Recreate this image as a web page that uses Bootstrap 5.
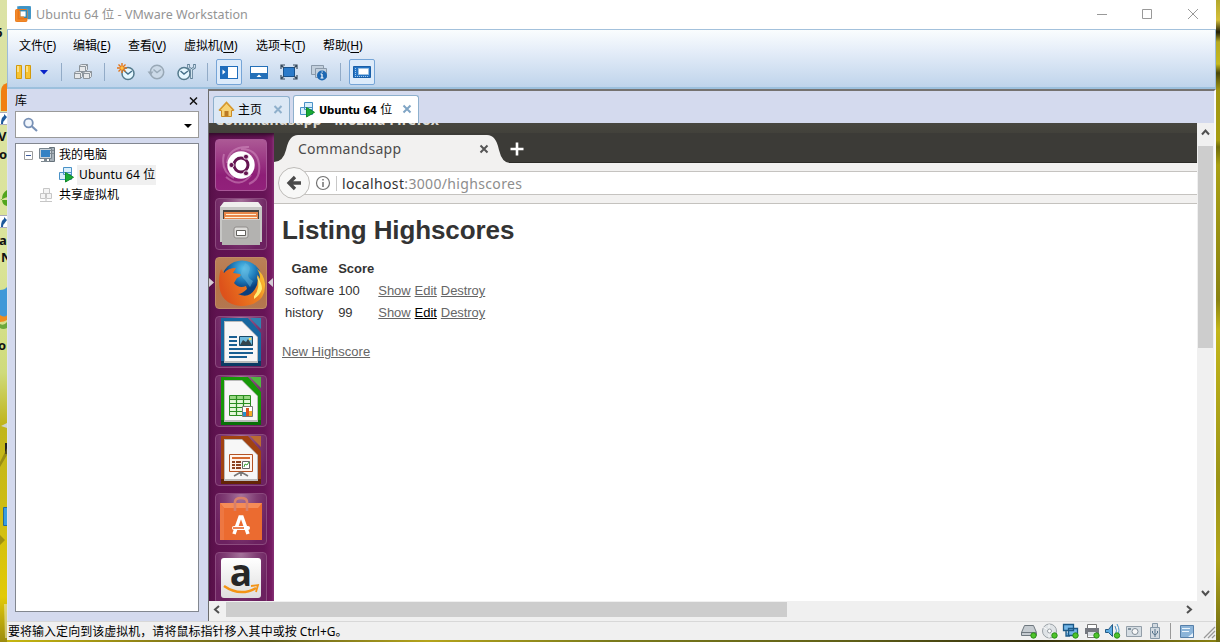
<!DOCTYPE html>
<html lang="zh-CN">
<head>
<meta charset="utf-8">
<title>Ubuntu 64 位 - VMware Workstation</title>
<link href="https://cdn.jsdelivr.net/npm/bootstrap@5.3.0/dist/css/bootstrap.min.css" rel="stylesheet">
<style>
html,body{height:642px;overflow:hidden}
body{font:12px/16px "Noto Sans","Noto Sans CJK SC",sans-serif;color:#000;background:#b5a71a}
svg{display:block;flex:none}
.desk{width:1220px;height:642px;background:linear-gradient(90deg,#c9b90f,#8f8216 12%,#63601c 22%,#b5a41b 35%,#7b7b1b 50%,#5f5f17 70%,#332f0c 85%,#8a8212)}
.edge-l{width:7px}
.edge-r{width:4px;background:linear-gradient(#b3a82c,#d5bf3a 20px,#201d06 32px,#b7aa22 42px,#c5b91f 64px,#4a4708 73px,#a29713 90px,#a79d10 140px,#6f6c0b 147px,#a9a014 165px,#8a8312 300px,#c3b61b 330px,#9b9417 480px,#b3a61c 560px,#6e6b12)}
.win{width:1209px;height:640px;background:#f0f0f0}
.title{height:29px;background:#fff;color:#949494;padding-left:8px}
.title svg:first-child{margin-top:-2px}
.title .cap{font-size:12.5px;letter-spacing:.04px;margin-left:5px}
.bars{height:60px;border:1px solid #9dbcd8;border-top-color:#a3c1dc;border-bottom:2px solid #9cc0dd;background:linear-gradient(#fafdfe,#e6eef9 35%,#bfd4eb)}
.menu{height:27px;padding-left:11px;line-height:32px}
.menu span{white-space:nowrap;letter-spacing:-.1px}
.menu u{text-underline-offset:2px}
.tools{height:30px;padding-left:7px}
.lib{width:201px;background:#d4daee;border-left:1px solid #dfe3f0}
.lib-h{height:22px;padding:1px 6px 0 7px}
.find{margin-left:7px;width:184px;height:27px;background:#fff;border:1px solid #9a9a9a}
.tree{margin:5px 0 0 7px;width:184px;height:469px;background:#fff;border:1px solid #828790;padding-top:1px}
.tree>div{height:20px}
.vm{width:1008px;border-left:1px solid #6d6d6d;border-top:2px solid #757270;border-right:2px solid #fafafa}
.tabs{height:32px;background:#d4daee;padding-left:4px}
.vtab{border:1px solid #8eb0cd;border-bottom:0;border-radius:3px 3px 0 0}
.vtab.home{width:77px;height:27px;background:#dce8f5}
.vtab.cur{width:126px;height:28px;background:#fff;margin-left:3px}
.vtab b{font:bold 11.3px/16px "DejaVu Sans Condensed","DejaVu Sans","Noto Sans CJK SC",sans-serif;font-stretch:condensed;white-space:nowrap;letter-spacing:-.2px}
.vtab b span{font:12px/16px "Noto Sans CJK SC",sans-serif}
.guest{width:988px;height:478px;background:#fff;overflow:hidden}
.gtitle{height:10px;overflow:hidden;background:linear-gradient(#47463f,#42413b);color:#dfdbd2;font:bold 14px/20px "Noto Sans",sans-serif;padding-left:6px}
.gtitle span{display:block;margin-top:-13px;letter-spacing:.22px;white-space:nowrap}
.launch{width:65px;background:linear-gradient(90deg,#560f47,#5f1350 12%,#661456 85%,#751b62 96%,#8b367b);box-shadow:inset 0 5px 4px -3px #2d0a26;padding:6px 7px 0 6px;gap:7px;height:468px}
.tile{width:52px;height:52px;border-radius:4px;border:1px solid #8b4a7e;background:radial-gradient(ellipse at 50% 0,#a5729b,#7f3c73 45%,#6c2160 80%);flex:none}
.tile svg{margin:-1px}
.tile.dash{background:linear-gradient(#ac5995,#8e1e77 70%,#92217b);border-color:#a95798}
.tile.fox{background:linear-gradient(#ba8158,#b77346 60%,#b37750);border-color:#c08a66}
.strip{height:30px;background:#3c3b37;border-bottom:1px solid #2c2b28}
.strip svg{height:30px}
.nav-row{height:41px;background:#f2f1f0;border-bottom:1px solid #c4c2be;padding-top:8px}
.addr{height:24px;background:#fff;border:solid #c5c3c0;border-width:1px 0;margin-left:18px}
.page{padding:8px;font:13px/18px "Liberation Sans",Arial,sans-serif;color:#333}
.page h1{font:bold 26px/36px "Liberation Sans",Arial,sans-serif;margin:0 0 9px;letter-spacing:-.1px}
.page a,.page a:hover{color:#666;text-decoration:underline}
.page a.hot{color:#000}
.page table{border-collapse:separate;border-spacing:2px}
.page td,.page th{padding:1px}
.page th{text-align:center}
.page td a{letter-spacing:-.05px}
.vsb{width:17px;height:495px;background:#f0f0f0;padding-left:1px}
.vsb i{display:block;width:15px;height:202px;background:#cdcdcd}
.hsb{height:17px;background:#f0f0f0}
.hsb i{display:block;width:561px;height:15px;background:#cdcdcd}
.status{height:19px;background:#f0f0f0;border-top:1px solid #d8d8d8}
</style>
</head>
<body>
<div class="desk d-flex">
<svg class="edge-l" width="7" height="642" viewBox="0 0 7 642">
 <defs><linearGradient id="dk" x2="0" y2="1"><stop offset="0" stop-color="#dbe2a5"/><stop offset=".4" stop-color="#dbe49a"/><stop offset=".58" stop-color="#cfdb7c"/><stop offset=".66" stop-color="#c0b51d"/><stop offset=".8" stop-color="#cfbd12"/><stop offset=".93" stop-color="#e2ca08"/><stop offset="1" stop-color="#9b8b10"/></linearGradient></defs>
 <path fill="url(#dk)" d="M0 0h7v642H0z"/>
 <path fill="#f07f12" d="M7 83Q1 85 1 91v20h6z"/>
 <g fill="#fff" stroke="#aab"><path d="M-1 112.500h9v12h-9zM-1 215.500h9v12h-9z"/></g>
 <path fill="#1e5a9c" d="M1 124q0-7 3-8v-2l3 3-3 4q-1 0-1 3zM1 227q0-7 3-8v-2l3 3-3 4q-1 0-1 3z"/>
 <path fill="#52a51d" d="M7 190q-5 3-5 9 0 6 5 7zM0 200l7-3v3H0z"/>
 <path fill="#4098d8" d="M0 290q5 0 7-3v32H0z"/><path fill="#f08d20" d="M0 315q5 3 7 0v5q-3 2-7 2z"/><path fill="#6da83c" d="M0 324q4 2 7-2v6q-4 2-7 0z"/>
 <g font-family="Noto Sans,sans-serif" font-size="13" font-weight="bold" fill="#111"><text x="-5" y="37">6</text><text x="-2" y="141">V</text><text x="-1" y="159">o</text><text x="-1" y="245">a</text><text x="1" y="262">N</text><text x="-2" y="350">o</text></g>
 <path fill="#cdd3cc" d="m1 426 6-3v5z"/><path fill="#222" d="M5 443h2v11H5z"/><path fill="#3a9de0" stroke="#236a9e" d="M3.500 507.500h5v18h-5z"/><path fill="#7b6f14" d="m0 535 5 5-5 5zM0 462l7-14v7l-7 12z" opacity=".6"/><path fill="#e9e6b4" opacity=".6" d="M4 604h3v34H5z"/>
</svg>
<div class="win d-flex flex-column">
 <header class="title d-flex align-items-center">
  <svg width="16" height="16" viewBox="0 0 16 16"><rect x="3.500" width="12.500" height="13" rx="2" fill="#4da0d0"/><rect y="3" width="12.500" height="13" rx="2" fill="#ea7618"/><path d="M3.500 3V1.500h11V12H13" fill="none" stroke="#3f93c4" stroke-width="2.500"/><path d="M1.500 4v10.500h10" fill="none" stroke="#f08a2c" stroke-width="2"/><rect x="4.700" y="4.700" width="6.600" height="6.600" fill="#fff" stroke="#3389b4" stroke-width="1.400"/><path fill="none" stroke="#e88328" stroke-width="1.400" d="M4.700 4.500v6.800H9"/></svg>
  <span class="cap">Ubuntu 64 位 - VMware Workstation</span>
  <svg class="ms-auto" width="128" height="26" viewBox="0 0 128 26" fill="none" stroke="#999"><path d="M9 12.500h10M54.500 7.500h9v9h-9zM100 7l10 10M110 7l-10 10"/></svg>
 </header>
 <div class="bars">
  <nav class="menu d-flex">
   <span style="width:54px">文件(<u>F</u>)</span><span style="width:55px">编辑(<u>E</u>)</span><span style="width:56px">查看(<u>V</u>)</span><span style="width:72px">虚拟机(<u>M</u>)</span><span style="width:67px">选项卡(<u>T</u>)</span><span>帮助(<u>H</u>)</span>
  </nav>
  <div class="tools d-flex">
   <svg width="18" height="30"><g fill="#f7c331" stroke="#d29a0c"><path d="M1.500 8.500h5v13h-5zM10.500 8.500h5v13h-5z"/></g><path fill="#fbe08a" d="M2 9h2v6H2zM11 9h2v6h-2z"/></svg>
   <svg width="22" height="30"><path d="M7 13h8l-4 4.500z" fill="#0a24c8"/></svg>
   <svg width="13" height="30"><path d="M6.500 6v18" stroke="#92abc7"/></svg>
   <svg width="30" height="30"><g fill="#e6e8ea" stroke="#8d959c"><path d="M11.500 8.500l2-1h6v5l-2 2h-6zM6.500 15.500l2-1h6v5l-2 2h-6zM15.500 15.500l2-1h6v5l-2 2h-6z"/><path fill="none" d="M11.500 9.500h6v5M17.500 9.500l2-2M6.500 16.500h6v5M12.500 16.500l2-2M15.500 16.500h6v5M21.500 16.500l2-2"/></g></svg>
   <svg width="13" height="30"><path d="M6.500 6v18" stroke="#92abc7"/></svg>
   <svg width="30" height="30"><circle cx="17" cy="16.500" r="6" fill="#e5f7ff" stroke="#557b8d" stroke-width="1.500"/><path d="M13.500 14l3.500 3 4-3" fill="none" stroke="#45708a" stroke-width="1.500"/><path d="M11 6v10M6 11h10M7.500 7.500l7 7M14.500 7.500l-7 7" stroke="#e37417" stroke-width="1.400"/><circle cx="11" cy="11" r="1.700" fill="#ffc446"/></svg>
   <svg width="30" height="30"><circle cx="16" cy="15" r="6.700" fill="#ccdae8" stroke="#98a8b6" stroke-width="1.500"/><path d="M12.500 12.500l3.500 3 4-3" fill="none" stroke="#9aabb9" stroke-width="1.500"/><path d="M6.500 14.500h6l-3 4z" fill="#9aa9b7"/></svg>
   <svg width="30" height="30"><circle cx="13" cy="16.500" r="6" fill="#e5f7ff" stroke="#557b8d" stroke-width="1.500"/><path d="M9.500 14l3.500 3 4-3" fill="none" stroke="#45708a" stroke-width="1.500"/><path d="M17.500 7v3.500l3 2 3-2V7M20.500 12v10" fill="none" stroke="#5f7f96" stroke-width="2.600"/><path d="M17.500 8v2.500l3 2 3-2V8M20.500 12v9" fill="none" stroke="#d0e2ed" stroke-width="1"/></svg>
   <svg width="13" height="30"><path d="M6.500 6v18" stroke="#92abc7"/></svg>
   <svg width="30" height="30"><rect x="2.500" y="2.500" width="25" height="25" rx="1.500" fill="#ddebfa" stroke="#76a5d7"/><path fill="#1f6dbc" d="M6 9h18v13H6z"/><path fill="#fff" d="M14 10h9v11h-9z"/><path fill="#fff" d="m8.500 12.500 3 2.500-3 2.500z"/></svg>
   <svg width="30" height="30"><path fill="#2470b8" d="M6 9h18v13H6z"/><path fill="#fff" d="M7 10h16v6H7z"/><path fill="#fff" d="m12.500 20 2.500-2.500 2.500 2.500z"/></svg>
   <svg width="30" height="30"><path fill="#2b7ac9" stroke="#16528f" d="M9.500 10.500h11v9h-11z"/><path d="M7 12V8h4M19 8h4v4M7 18v4h4M19 22h4v-4M7 8l3 3M23 8l-3 3M7 22l3-3M23 22l-3-3" fill="none" stroke="#36495b" stroke-width="1.200"/></svg>
   <svg width="30" height="30"><g fill="#c3d0dd" stroke="#8b9aaa"><path d="M7.500 8.500h12v9h-12z"/><path d="M11.500 11.500h11v9h-11z"/></g><circle cx="18" cy="18.500" r="5" fill="#1d68b3"/><path d="M18 17v4M16.500 17H18M16.500 21h3M17.500 15h1.300" stroke="#fff" stroke-width="1.200"/></svg>
   <svg width="13" height="30"><path d="M6.500 6v18" stroke="#92abc7"/></svg>
   <svg width="30" height="30"><rect x="2.500" y="2.500" width="25" height="25" rx="1.500" fill="#ddebfa" stroke="#76a5d7"/><path fill="#2474c5" stroke="#1a5fa7" d="M6.500 9.500h17v11h-17z"/><path fill="#fff" stroke="#9ec1e0" d="M11.500 11.500h10v6h-10z"/><path stroke="#a8cbea" stroke-dasharray="1 1" d="M8.500 11v9M10 19.500h12"/></svg>
  </div>
 </div>
 <main class="d-flex" style="height:532px">
  <aside class="lib">
   <div class="lib-h d-flex justify-content-between align-items-center"><span>库</span><svg width="18" height="16"><path d="m6 4.500 7 7m0-7-7 7" stroke="#111" stroke-width="1.500"/></svg></div>
   <div class="find d-flex justify-content-between"><svg width="30" height="25"><circle cx="12.500" cy="11" r="4.300" fill="#f1f6fc" stroke="#7891b6" stroke-width="1.800"/><path d="m15.500 14 5.500 5" stroke="#7891b6" stroke-width="2.200"/></svg><svg width="19" height="25"><path d="M5 12h8l-4 4z"/></svg></div>
   <div class="tree">
    <div class="d-flex align-items-center"><svg width="43" height="20"><path fill="#fff" stroke="#9c9c9c" d="M8.500 6.500h8v8h-8z"/><path stroke="#3c5a9b" d="M10 10.500h5"/><path fill="#a7b1b9" stroke="#66727b" d="M33.500 2.500h5v14h-5z"/><path fill="#c9d2d9" stroke="#78848d" d="M23.500 3.500h12v10h-12z"/><path fill="#3482c4" d="M25 5h9v7h-9z"/><path fill="#7d8890" d="M28 14h3v2h3v1h-9v-1h3zM34 5h4v1h-4zM34 8h4v1h-4z"/></svg><span>我的电脑</span></div>
    <div class="d-flex align-items-center"><svg width="61" height="20"><use href="#vmi" x="42" y="2"/></svg><span style="background:#f0f0f0;padding:0 1px 0 2px;height:20px;line-height:20px;white-space:nowrap;letter-spacing:.15px">Ubuntu 64 位</span></div>
    <div class="d-flex align-items-center"><svg width="43" height="20"><path fill="#f4f4f4" stroke="#c6c6c6" d="M27.500 3.500h6v5h-6zM24.500 8.500h5v5h-5zM30.500 8.500h5v5h-5zM30 14v3M24 16.500h12"/></svg><span>共享虚拟机</span></div>
   </div>
  </aside>
  <section class="vm">
   <div class="tabs d-flex align-items-end">
    <div class="vtab home d-flex align-items-center"><svg width="24" height="26"><path fill="#f7d273" stroke="#c98a24" d="m5.500 13.500 7-8 7 8h-2v6h-10v-6z"/><path fill="none" stroke="#d79a30" stroke-width="1.600" d="m5 13.500 7.500-8 7.500 8"/><path fill="#ba7a25" d="M10.500 14h4v5h-4z"/></svg><span>主页</span><svg class="ms-auto" width="22" height="26"><path d="m7.500 9 7 7m0-7-7 7" stroke="#8fb0cc" stroke-width="2"/></svg></div>
    <div class="vtab cur d-flex align-items-center"><svg width="25" height="27"><defs><g id="vmi"><path fill="#d9effc" stroke="#4a91c6" d="M5.500 .5h8v7h-8zM1.500 5.500h6v7h-6zM7.500 5.500h6v7h-6z"/><path fill="#18ab35" stroke="#128829" d="M7.500 5.500v9.500l8-4.700z"/></g></defs><use href="#vmi" x="5" y="6"/></svg><b>Ubuntu 64 <span>位</span></b><svg class="ms-auto" width="22" height="27"><path d="m7.500 9.500 7 7m0-7-7 7" stroke="#80a5c5" stroke-width="2"/></svg></div>
   </div>
   <div class="d-flex">
    <div>
     <div class="guest">
      <div class="gtitle"><span>Commandsapp - Mozilla Firefox</span></div>
      <div class="d-flex">
       <div class="launch d-flex flex-column">
        <div class="tile dash"><svg width="52" height="52"><path d="M26 10Q42 10 44 25t-10 20M12 24Q14 7 34 8M19 39Q5 32 9 15M36 36Q25 50 11 38" fill="none" stroke="#d796c6" stroke-width="2" opacity=".5"/><circle cx="26" cy="26" r="13.700" fill="#fff"/><circle cx="26" cy="26" r="7" fill="none" stroke="#651451" stroke-width="3"/><g fill="#651451" stroke="#fff" stroke-width=".8"><circle cx="16.500" cy="26" r="2.500"/><circle cx="31" cy="17.700" r="2.500"/><circle cx="31" cy="34.300" r="2.500"/></g></svg></div>
        <div class="tile"><svg width="52" height="52"><path fill="#c7c7c5" d="M9 4h34l4 5v35H5V9z"/><path fill="#efefed" d="M9 4h34l4 5H5z"/><path fill="#46443f" d="M8 12h36v10H8z"/><path fill="#e88749" d="M9 14h34v8H9z"/><path fill="#fff2d8" d="M11 16h30v1H11zM10 19h32v1H10z"/><path fill="#b3b2b0" d="M7 21h38v26H7z"/><path fill="#d1d0cf" d="M7 21h38v1H7z"/><rect x="19" y="29" width="14" height="11" rx="2" fill="#dcdbd9" stroke="#8f8d8b"/><path fill="#fff" stroke="#61605d" d="M21.500 32.500h9v5h-9z"/></svg></div>
        <div class="tile fox"><svg width="52" height="52"><defs><radialGradient id="globe" cx=".55" cy=".2"><stop stop-color="#58c4ed"/><stop offset=".55" stop-color="#217fbd"/><stop offset="1" stop-color="#0a3f7d"/></radialGradient><linearGradient id="fur" x1="0" y1=".3" x2="1"><stop stop-color="#dd521b"/><stop offset=".65" stop-color="#ee8020"/><stop offset="1" stop-color="#ffd638"/></linearGradient></defs><circle cx="27" cy="24" r="20.500" fill="url(#globe)"/><path d="M30 6q7 3 4 9t4 9l-3 6-5-7q-6-5-3-10z" fill="#67b7dd" opacity=".5"/><path fill="url(#fur)" d="M6 12l3 4q4-5 12-5l-3 5 7 1q2 2-3 4l-3 5q5 6 12 3l1 3q-5 5-9 5 11 5 17-5 4-5 2-14 2 1 3 4 0-6-3-10 7 5 8 15 1 21-24 22Q4 47 4 25q0-8 2-13z"/><path d="M39 39q7-8 3-20 5 7 5 13-2 6-8 10z" fill="#ffec75"/></svg></div>
        <div class="tile"><svg width="52" height="52"><path fill="#17679f" d="M6 2h27L46 17v33H6z"/><path fill="#0b3a64" d="M6 45h40v5H6z"/><path fill="#3181af" d="M35 2h11v11z"/><path fill="#bababa" d="M9 5h18l16 16v26H9z"/><path fill="#f7f7f7" d="M10 6h17l15 15v24H10z"/><path stroke="#195f92" stroke-width="2" d="M14 21h8M14 25h8M14 29h8M14 33h24M14 37h24M14 41h18"/><path fill="#6ebbdd" stroke="#174866" d="M24.500 20.500h13v9h-13z"/><path fill="#34454c" d="m25 29 3-5 3 2 2-3 4 6z"/><circle cx="35" cy="23" r="1.300" fill="#ffdf51"/></svg></div>
        <div class="tile"><svg width="52" height="52"><path fill="#179708" d="M6 2h27L46 17v33H6z"/><path fill="#096f08" d="M6 45h40v5H6z"/><path fill="#51b742" d="M35 2h11v11z"/><path fill="#bababa" d="M9 5h18l16 16v26H9z"/><path fill="#f7f7f7" d="M10 6h17l15 15v24H10z"/><path fill="#e5f7da" stroke="#2a8d20" d="M14.500 20.500h21v20h-21z"/><path fill="#97d782" d="M15 21h20v3H15z"/><path stroke="#2a8d20" stroke-width="1.200" d="M14 24.500h22M14 28.500h22M14 32.500h22M14 36.500h22M21.500 20v21M28.500 20v21"/><path fill="#fff" stroke="#777" d="M27.500 31.500h10v10h-10z"/><path fill="#2491cc" d="M28 37h3v4h-3z"/><path fill="#d85221" d="M31 33h3v8h-3z"/><path fill="#f1ac25" d="M34 36h3v5h-3z"/></svg></div>
        <div class="tile"><svg width="52" height="52"><path fill="#a14211" d="M6 2h27L46 17v33H6z"/><path fill="#642506" d="M6 45h40v5H6z"/><path fill="#bb6a32" d="M35 2h11v11z"/><path fill="#bababa" d="M9 5h18l16 16v26H9z"/><path fill="#f7f7f7" d="M10 6h17l15 15v24H10z"/><path fill="#fff4ed" stroke="#b45324" d="M14.500 20.500h23v17h-23z"/><path fill="#d36931" d="M17 23h18v2H17z"/><path stroke="#8d4220" stroke-width="2" stroke-dasharray="3 1 5 20" d="M17 28h10M17 31h10M17 34h10"/><path fill="#fff" stroke="#666" d="M27.500 27.500h7v7h-7z"/><path d="m29 33 1-3 2 1 2-3" fill="none" stroke="#37a433"/><path d="M26 38l-7 4M26 38l7 4M26 38v4" stroke="#777" stroke-width="1.600"/></svg></div>
        <div class="tile"><svg width="52" height="52"><path fill="#eb6b30" d="M5 10h42v37H5z"/><path fill="#f58c57" d="M5 10h42l-4 5H9z"/><path fill="#ed7742" d="m5 10 4 5v32H5z"/><path d="M20 18V9q0-4 6-4t6 4v9" fill="none" stroke="#d9806a" stroke-width="2.600"/><path d="m19 41 6-17h2l6 17" fill="none" stroke="#fff" stroke-width="3.500"/><rect x="17" y="33" width="18" height="4" rx="2" fill="#fff"/><path stroke="#e45b1d" stroke-width="1.500" d="M18 35h11"/></svg></div>
        <div class="tile"><svg width="52" height="52"><defs><linearGradient id="am" x2="0" y2="1"><stop stop-color="#fff"/><stop offset="1" stop-color="#dedede"/></linearGradient></defs><rect x="6" y="6" width="40" height="40" rx="3" fill="url(#am)"/><text x="26" y="34" text-anchor="middle" font-family="Open Sans,sans-serif" font-weight="bold" font-size="37" fill="#262626">a</text><path d="M9 34q16 11 32 2" fill="none" stroke="#f39416" stroke-width="2.500"/><path d="m36 34 7-1-2 7" fill="none" stroke="#f39416" stroke-width="1.800"/></svg></div>
       </div>
       <div class="flex-grow-1">
        <div class="strip"><svg width="300" height="30"><path fill="#f2f1f0" d="M0 30v-1q9 0 12-12Q15 2 24 2h189q9 0 12 15 3 13 11 13z"/><text x="24" y="21" font-family="Noto Sans,sans-serif" font-size="14" fill="#4b4b4b" textLength="103">Commandsapp</text><path d="m206.500 12.500 7 7m0-7-7 7" stroke="#555" stroke-width="2"/><path d="M243 9.500v13M236.500 16h13" stroke="#fff" stroke-width="2.600"/></svg></div>
        <div class="nav-row position-relative"><div class="addr"><svg width="480" height="22"><circle cx="31" cy="11" r="6.500" fill="none" stroke="#727272" stroke-width="1.200"/><path d="M31 10v5M31 7v1.500" stroke="#727272" stroke-width="1.500"/><path d="M44.500 4v15" stroke="#c8c8c8"/><text x="50" y="17" fill="#8d8d8d" font-family="Noto Sans,sans-serif" font-size="14" textLength="180"><tspan fill="#333">localhost</tspan>:3000/highscores</text></svg></div>
         <svg class="position-absolute" style="left:4px;top:4px" width="32" height="33"><circle cx="16" cy="16" r="15.500" fill="#f8f8f7" stroke="#bdbbb8"/><path d="m17 10-6 6 6 6M12 16h11" fill="none" stroke="#4a4a4a" stroke-width="3.300"/></svg></div>
        <div class="page">
         <h1>Listing Highscores</h1>
         <table><thead><tr><th>Game</th><th>Score</th><th colspan="3"></th></tr></thead><tbody>
          <tr><td>software</td><td>100</td><td><a href="#">Show</a></td><td><a href="#">Edit</a></td><td><a href="#">Destroy</a></td></tr>
          <tr><td>history</td><td>99</td><td><a href="#">Show</a></td><td><a href="#" class="hot">Edit</a></td><td><a href="#">Destroy</a></td></tr>
         </tbody></table><br>
         <a href="#">New Highscore</a>
        </div>
       </div>
      </div>
      <svg class="position-absolute" style="left:209px;top:277px" width="65" height="12"><path fill="#d5cdd5" d="M0 1v9l5-4.500zM64 1v9l-5-4.500z"/></svg>
     </div>
     <div class="hsb d-flex align-items-center"><svg width="17" height="17"><path d="m10 5-4 3.500 4 3.500" fill="none" stroke="#505050" stroke-width="2"/></svg><i></i><svg class="ms-auto" width="17" height="17"><path d="m7 5 4 3.500-4 3.500" fill="none" stroke="#505050" stroke-width="2"/></svg></div>
    </div>
    <div class="vsb"><svg width="15" height="23"><path d="m4 11.500 3.500-4 3.500 4" fill="none" stroke="#505050" stroke-width="2"/></svg><i></i><svg style="margin-top:236px" width="15" height="17"><path d="m4 7 3.500 4L11 7" fill="none" stroke="#505050" stroke-width="2"/></svg></div>
   </div>
  </section>
 </main>
 <footer class="status d-flex align-items-center"><span style="padding:2px 0 0 1px;letter-spacing:.03px">要将输入定向到该虚拟机，请将鼠标指针移入其中或按 Ctrl+G。</span>
  <svg class="ms-auto" width="200" height="18" viewBox="1016 0 200 18">
   <path fill="#c5cbd0" stroke="#6e777e" d="M1024.500 3.500h9l3 7v3h-15v-3z"/><path stroke="#6e777e" d="M1021 10.500h15"/>
   <circle cx="1049.500" cy="9" r="7" fill="#dfe3e6" stroke="#9ba2a7"/><path d="m1043 5 13 8M1049 2v14" stroke="#fff" opacity=".8"/><circle cx="1049.500" cy="9" r="2" fill="#fff" stroke="#979ea4"/>
   <g fill="#73b6e7" stroke="#1c5886" stroke-width="1.300"><path d="M1063.500 2.500h10v6h-10zM1068.500 6.500h9v7h-9zM1066 9v5h4"/></g>
   <path fill="#fff" stroke="#777" d="M1087.500 2.500h9v13h-9z"/><path fill="#74777e" d="M1085 6h14v6h-14z"/><path fill="#d8dde3" d="M1088 10h8v4h-8z"/>
   <path fill="#5cabe1" stroke="#245984" d="M1105.500 7.500h3l4-5v12l-4-4h-3z"/><path d="M1115 4q3 5 0 9M1117 2q4 7 0 12" fill="none" stroke="#4e94c5"/>
   <path fill="#d5dde3" stroke="#939ea8" d="M1126.500 4.500h15v10h-15z"/><circle cx="1135" cy="9.500" r="3" fill="#f8f8f8" stroke="#818d97"/><path fill="#7d8f9b" d="M1128 6h3v2h-3z"/>
   <path fill="#d2dae1" stroke="#8799a8" d="M1152.500 1.500h5v4h-5zM1150.500 5.500h9v11h-9z"/><path d="M1155 7v8M1152.500 9v2l2.500 2 2.500-2V9" stroke="#54738b" fill="none"/>
   <path stroke="#999" d="M1170.500 1v16"/><path fill="#8bb4d9" stroke="#567fa9" d="M1180.500 3.500h13v12h-13z"/><path stroke="#eaf4fc" d="M1182 6.500h8M1182 9.500h7"/><path fill="#e9f3fc" d="m1193 11-5 4h5z"/>
   <g fill="#4fc32b" stroke="#268e16"><circle cx="1033.500" cy="13.500" r="2.700"/><circle cx="1054.500" cy="13.500" r="2.700"/><circle cx="1075.500" cy="13.500" r="2.700"/><circle cx="1096.500" cy="13.500" r="2.700"/><circle cx="1117" cy="13.500" r="2.700"/></g>
   <path d="m1204 16 11-11m-7 11 7-7m-3 7 3-3" stroke="#999" stroke-width="1.300"/>
  </svg></footer>
</div>
<div class="edge-r ms-0"></div>
</div>
<script src="https://cdn.jsdelivr.net/npm/bootstrap@5.3.0/dist/js/bootstrap.bundle.min.js"></script>
</body>
</html>
